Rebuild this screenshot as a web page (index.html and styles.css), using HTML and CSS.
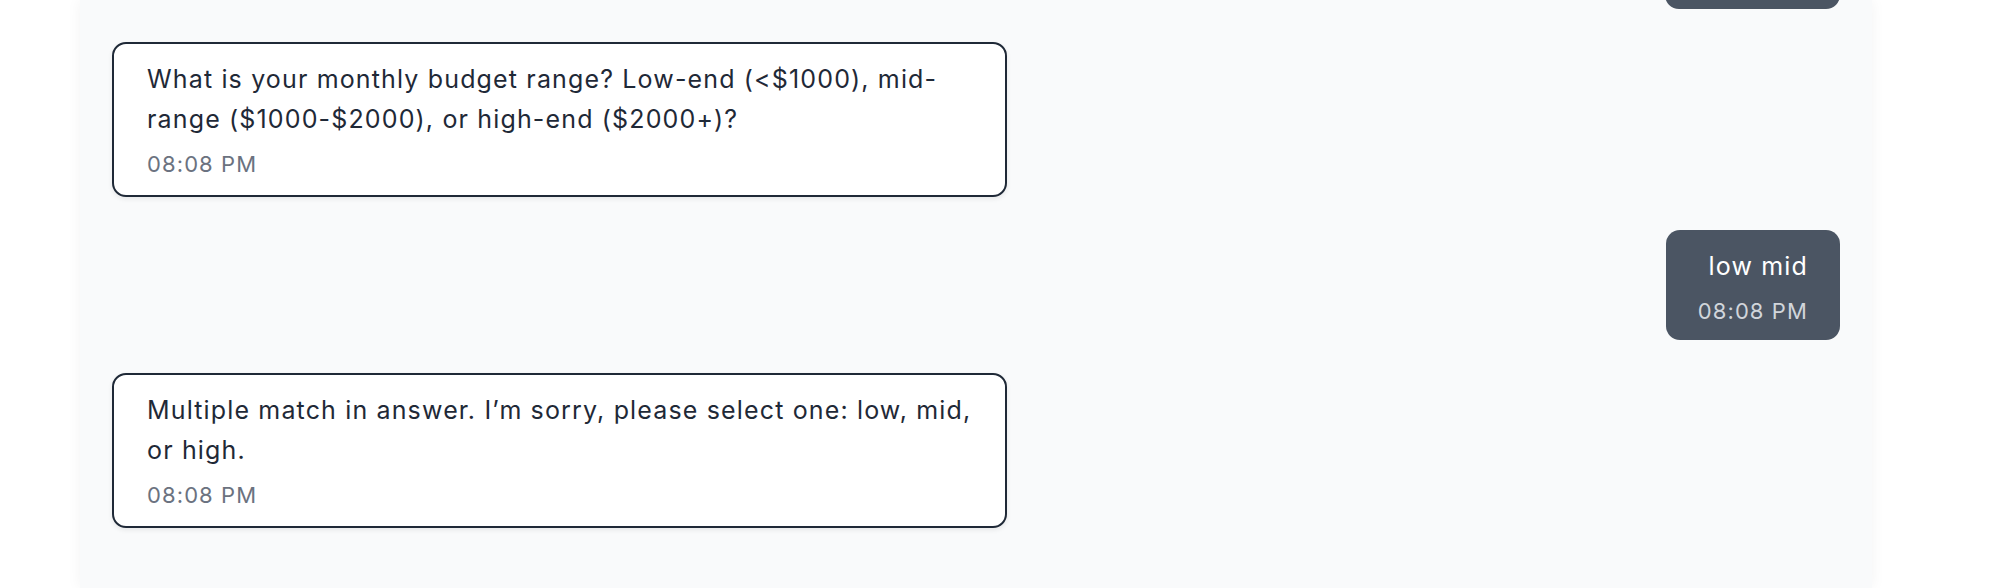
FILE: index.html
```html
<!DOCTYPE html>
<html lang="en">
<head>
<meta charset="utf-8">
<title>Chat</title>
<link rel="stylesheet" href="styles.css">
</head>
<body>
<main class="chat">
  <div class="msg user earlier" aria-hidden="true"></div>
  <div class="msg bot">
    <p class="text">What is your monthly budget range? Low-end (&lt;$1000), mid-range ($1000-$2000), or high-end ($2000+)?</p>
    <p class="time">08:08 PM</p>
  </div>
  <div class="msg user">
    <p class="text">low mid</p>
    <p class="time">08:08 PM</p>
  </div>
  <div class="msg bot">
    <p class="text">Multiple match in answer. I’m sorry, please select one: low, mid, or high.</p>
    <p class="time">08:08 PM</p>
  </div>
</main>
</body>
</html>
```
FILE: styles.css
```css
html, body {
  margin: 0;
  padding: 0;
  background: #ffffff;
  height: 588px;
  overflow: hidden;
}

body {
  font-family: "Inter", "Noto Sans", "Liberation Sans", sans-serif;
  color: #1f2937;
}

.chat {
  box-sizing: border-box;
  margin-left: 80px;
  width: 1792px;
  height: 588px;
  background: #f9fafb;
  box-shadow: 0 0 14px rgba(0, 0, 0, 0.05);
  padding: 0 32px 60px;
  display: flex;
  flex-direction: column;
  justify-content: flex-end;
  gap: 33px;
  overflow: hidden;
}

.msg {
  box-sizing: border-box;
  border-radius: 14px;
  flex: none;
}

.msg p {
  margin: 0;
}

.text {
  font-size: 25px;
  line-height: 40px;
  letter-spacing: 1.15px;
}

.time {
  font-size: 22px;
  line-height: 30px;
  letter-spacing: 1.1px;
  margin-top: 10px !important;
}

.bot {
  align-self: flex-start;
  max-width: 895px;
  background: #ffffff;
  border: 2px solid #1f2937;
  padding: 15px 33px 16px;
  box-shadow: 0 2px 5px rgba(0, 0, 0, 0.08);
}

.bot .time {
  color: #6b7280;
}

.user {
  align-self: flex-end;
  background: #4b5563;
  color: #ffffff;
  padding: 16px 32px 14px;
  text-align: right;
}

.user .time {
  color: #d1d5db;
}

.earlier {
  width: 175px;
  height: 109px;
}
```
